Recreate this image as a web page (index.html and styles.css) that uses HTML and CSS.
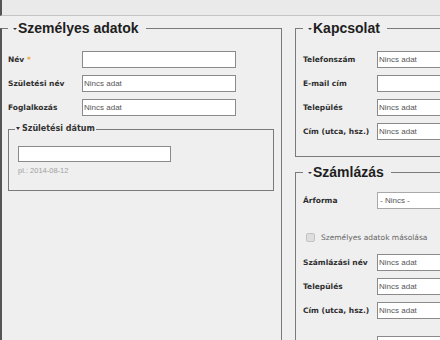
FILE: index.html
```html
<!DOCTYPE html>
<html lang="hu">
  <head>
    <meta charset="utf-8">
    <title>Ügyfél adatai</title>
    <link rel="stylesheet" href="styles.css">
  </head>
  <body>
    <div class="page">
      <div class="topbar"></div>
      <div class="columns">
        <fieldset class="panel panel-main">
          <legend><span class="toggle"></span>Személyes adatok</legend>
          <div class="row">
            <label class="row-label">Név <span class="req">*</span></label>
            <input class="field" type="text">
          </div>
          <div class="row">
            <label class="row-label">Születési név</label>
            <input class="field" type="text" value="Nincs adat">
          </div>
          <div class="row">
            <label class="row-label">Foglalkozás</label>
            <input class="field" type="text" value="Nincs adat">
          </div>
          <fieldset class="sub">
            <legend><span class="toggle toggle-small"></span>Születési dátum</legend>
            <input class="field field-date" type="text">
            <div class="hint">pl.: 2014-08-12</div>
          </fieldset>
        </fieldset>

        <div class="side">
          <fieldset class="panel panel-side">
            <legend><span class="toggle"></span>Kapcsolat</legend>
            <div class="row">
              <label class="row-label">Telefonszám</label>
              <input class="field" type="text" value="Nincs adat">
            </div>
            <div class="row">
              <label class="row-label">E-mail cím</label>
              <input class="field" type="text">
            </div>
            <div class="row">
              <label class="row-label">Település</label>
              <input class="field" type="text" value="Nincs adat">
            </div>
            <div class="row row-last">
              <label class="row-label">Cím (utca, hsz.)</label>
              <input class="field" type="text" value="Nincs adat">
            </div>
          </fieldset>

          <fieldset class="panel panel-side panel-billing">
            <legend><span class="toggle"></span>Számlázás</legend>
            <div class="row">
              <label class="row-label">Árforma</label>
              <select class="field field-select"><option>- Nincs -</option></select>
            </div>
            <div class="row row-check">
              <input class="check" type="checkbox" id="copyPersonal">
              <label class="check-label" for="copyPersonal">Személyes adatok másolása</label>
            </div>
            <div class="row">
              <label class="row-label">Számlázási név</label>
              <input class="field" type="text" value="Nincs adat">
            </div>
            <div class="row">
              <label class="row-label">Település</label>
              <input class="field" type="text" value="Nincs adat">
            </div>
            <div class="row">
              <label class="row-label">Cím (utca, hsz.)</label>
              <input class="field" type="text" value="Nincs adat">
            </div>
            <div class="row row-extra">
              <span class="row-label"></span>
              <input class="field" type="text">
            </div>
          </fieldset>
        </div>
      </div>
    </div>
  </body>
</html>
```

FILE: styles.css
```css
html, body { margin: 0; padding: 0; background: #efefef; overflow: hidden; }
body { font-family: "DejaVu Sans", Verdana, sans-serif; color: #333; }
.page { width: 600px; }
.topbar { height: 15px; background: #eaeaea; border-left: 2px solid #555; border-bottom: 1px solid #c4c4c4; }
.columns { display: flex; align-items: flex-start; margin-top: 3px; }

.panel { margin: 0; padding: 14px 8px 9px 6px; border: 1px solid #7a7a7a; min-width: 0; }
.panel > legend { padding: 0 7px 0 5px; font-family: "Liberation Sans", Arial, sans-serif; font-weight: bold; font-size: 14px; line-height: 18px; color: #1e1e1e; }
.panel-main { width: 282px; box-sizing: border-box; height: 360px; border-left: 2px solid #555; }
.side { margin-left: 13px; width: 260px; }
.panel-side { padding-left: 7px; }
.panel-billing { margin-top: 6px; padding-top: 11px; }

.toggle { display: inline-block; width: 0; height: 0; border-left: 2px solid transparent; border-right: 2px solid transparent; border-top: 2px solid #333; vertical-align: middle; margin-right: 1px; }
.toggle-small { border-top-width: 3px; margin-right: 2px; }

.row { display: flex; align-items: center; height: 17px; margin-bottom: 7px; }
.row-last { margin-top: 1px; }
.row-label { width: 74px; flex: none; font-size: 7.5px; font-weight: bold; color: #2e2e2e; }
.req { color: #f0a830; }
.field { box-sizing: border-box; width: 154px; height: 17px; margin: 0; padding: 0 1px; border: 1px solid #8a8a8a; background: #fff; font-family: "Liberation Sans", Arial, sans-serif; font-size: 8px; color: #555; flex: none; }
.field-select { appearance: none; -webkit-appearance: none; border-radius: 0; padding-left: 2px; border-color: #a8a8a8; }

.row-check { margin-top: 20px; margin-bottom: 8px; }
.check { appearance: none; -webkit-appearance: none; width: 9px; height: 9px; margin: 0 6px 0 3px; border: 1px solid #c2c2c2; border-radius: 2px; background: #dedede; }
.check-label { font-size: 7.5px; color: #666; }
.row-extra { margin-top: 17px; }

.sub { margin: 2px 0 0 0; width: 266px; box-sizing: border-box; padding: 6px 8px 15px 9px; border: 1px solid #7a7a7a; }
.sub > legend { margin-left: -3px; padding: 0 1px; font-size: 8px; font-weight: bold; line-height: 12px; color: #333; }
.field-date { width: 153px; height: 16px; }
.hint { margin-top: 4px; font-family: "Liberation Sans", Arial, sans-serif; font-size: 7.5px; color: #a0a0a0; }
```
